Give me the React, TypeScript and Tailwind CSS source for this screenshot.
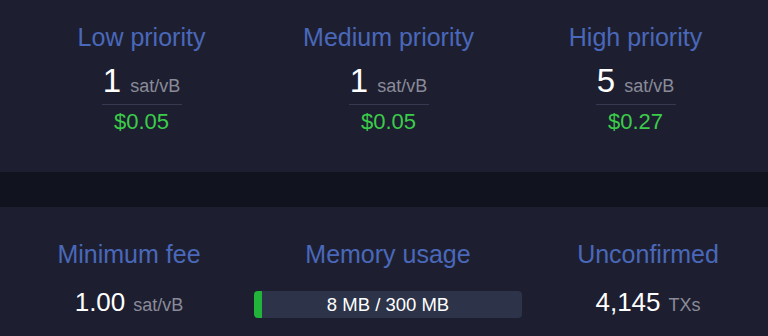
import React from "react";

const font = { fontFamily: '"Liberation Sans", Arial, sans-serif' };

function Fee({ title, value, usd }: { title: string; value: string; usd: string }) {
  return (
    <div className="flex flex-col items-center">
      <div className="text-[25px] leading-[30px] text-[#4a68b9]">{title}</div>
      <div className="mt-[11px] flex items-baseline justify-center border-b border-[#363950] pb-[5px] w-[80px] whitespace-nowrap">
        <span className="text-[33px] leading-[36px] text-white">{value}</span>
        <span className="ml-[9px] text-[18px] leading-none text-[#8a8b98]">sat/vB</span>
      </div>
      <div className="mt-[4px] text-[22px] leading-[26px] text-[#3bcc49]">{usd}</div>
    </div>
  );
}

export default function App() {
  return (
    <div style={font} className="w-[768px] h-[336px] overflow-hidden bg-[#1d1f31]">
      <div className="h-[172px] bg-[#1d1f31] grid grid-cols-3 pl-[18px] pr-[9px] pt-[22px]">
        <Fee title="Low priority" value="1" usd="$0.05" />
        <Fee title="Medium priority" value="1" usd="$0.05" />
        <Fee title="High priority" value="5" usd="$0.27" />
      </div>
      <div className="h-[35px] bg-[#11131f]" />
      <div className="flex pt-[32px] bg-[#1d1f31]">
        <div className="w-[258px] shrink-0 flex flex-col items-center">
          <div className="text-[25px] leading-[30px] text-[#4a68b9]">Minimum fee</div>
          <div className="mt-[18px] flex items-baseline whitespace-nowrap">
            <span className="text-[26px] leading-[30px] text-white">1.00</span>
            <span className="ml-[8px] text-[18px] leading-none text-[#8a8b98]">sat/vB</span>
          </div>
        </div>
        <div className="w-[260px] shrink-0 flex flex-col items-center">
          <div className="text-[25px] leading-[30px] text-[#4a68b9] whitespace-nowrap">Memory usage</div>
          <div className="mt-[22px] w-full flex justify-center">
            <div className="relative w-[268px] shrink-0 h-[27px] rounded-[4px] bg-[#2d3348] overflow-hidden flex items-center justify-center">
              <div className="absolute left-0 top-0 h-full w-[8px] bg-[#22b33a]" />
              <span className="relative text-[18.5px] leading-[20px] text-white">8 MB / 300 MB</span>
            </div>
          </div>
        </div>
        <div className="w-[240px] ml-[10px] shrink-0 flex flex-col items-center">
          <div className="text-[25px] leading-[30px] text-[#4a68b9]">Unconfirmed</div>
          <div className="mt-[18px] flex items-baseline whitespace-nowrap">
            <span className="text-[26px] leading-[30px] text-white">4,145</span>
            <span className="ml-[8px] text-[18px] leading-none text-[#8a8b98]">TXs</span>
          </div>
        </div>
      </div>
    </div>
  );
}
